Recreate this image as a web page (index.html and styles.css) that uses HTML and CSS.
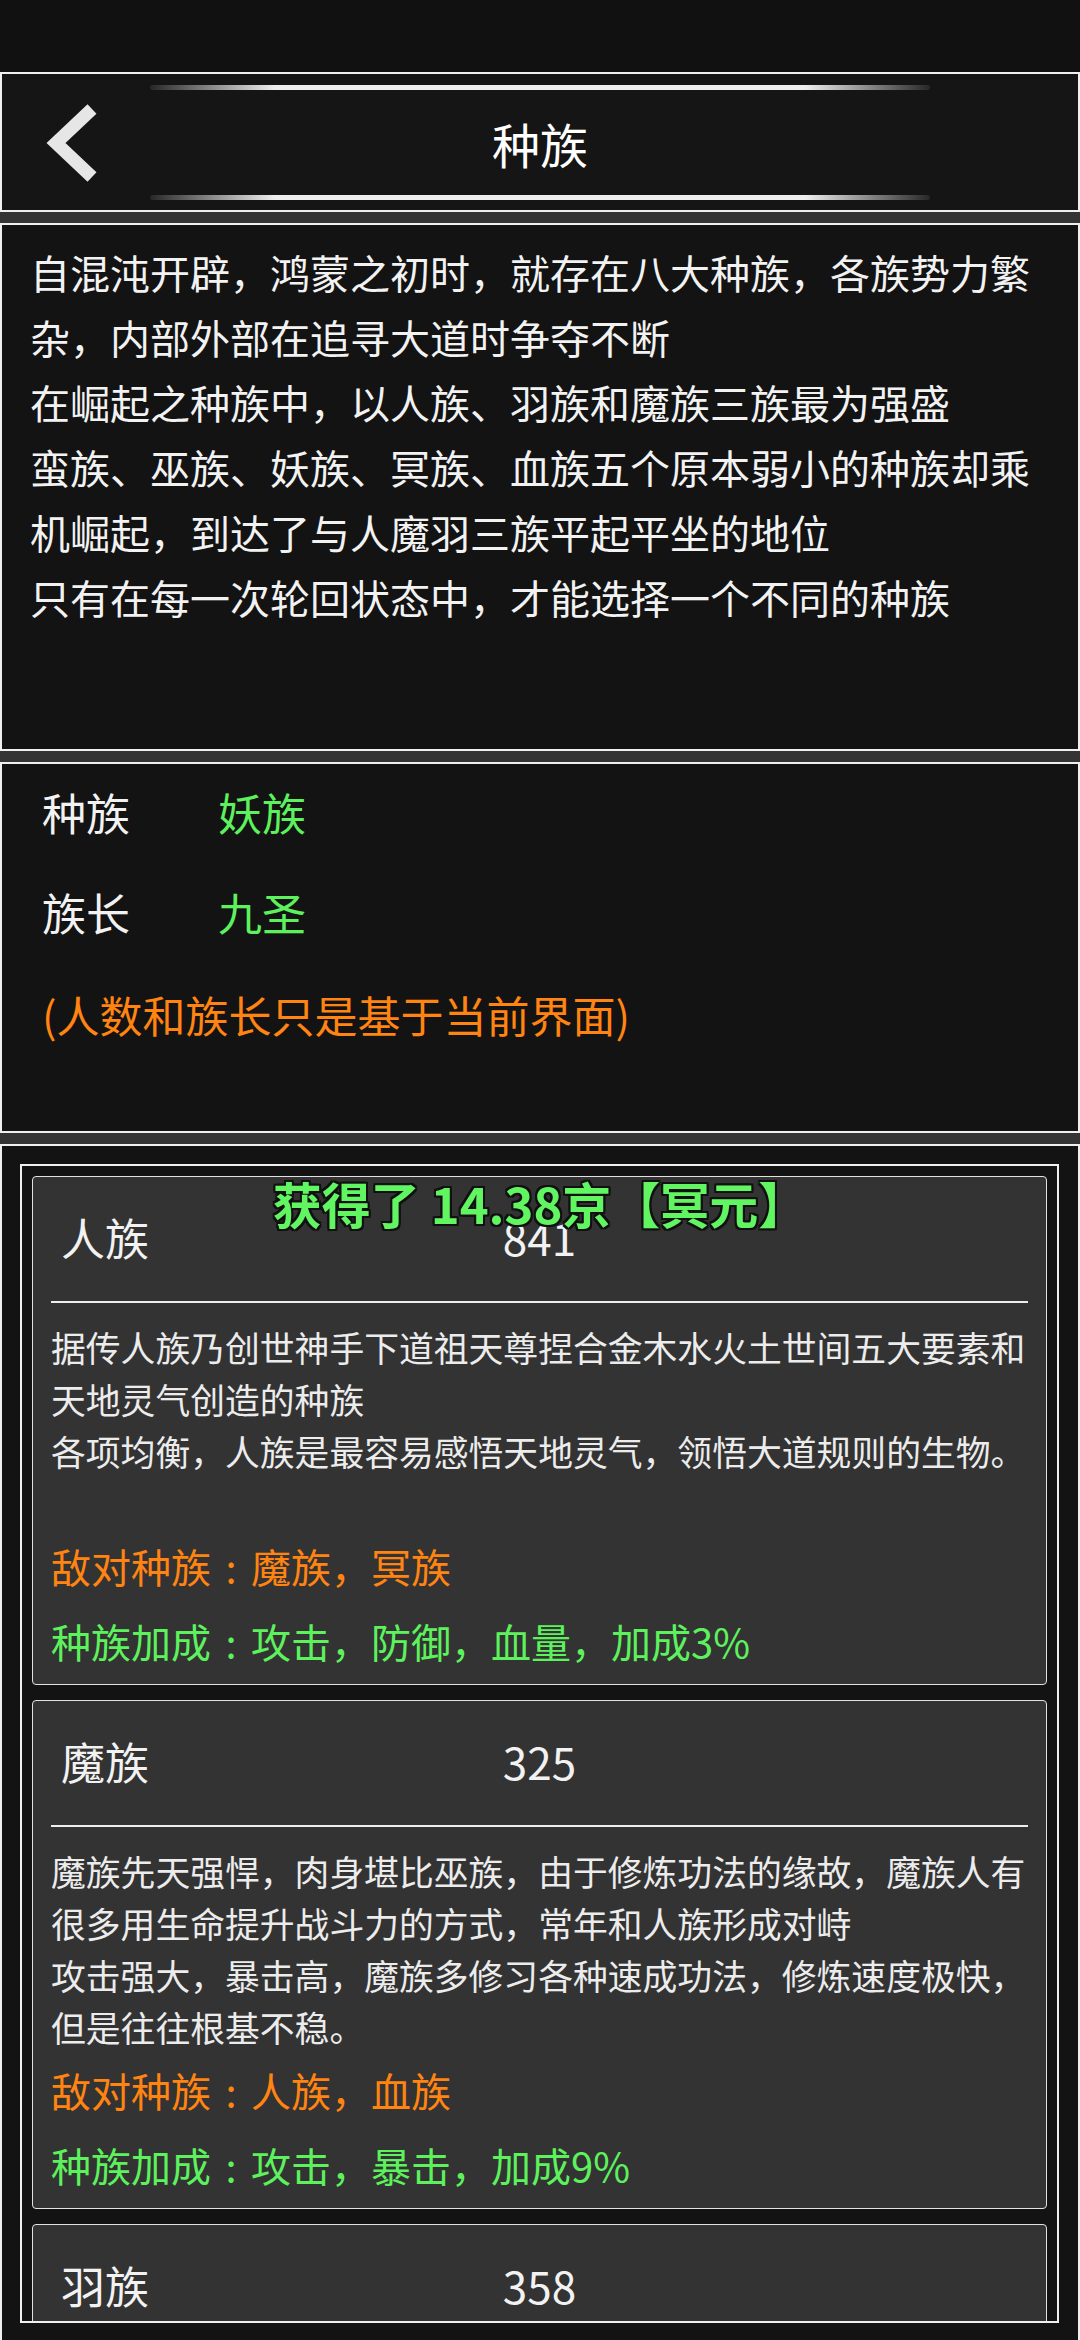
FILE: index.html
```html
<!DOCTYPE html>
<html lang="zh">
<head>
    <meta charset="UTF-8">
    <meta name="viewport" content="width=device-width, initial-scale=1.0">
    <title>种族</title>
    <link rel="stylesheet" href="styles.css">
</head>
<body>
    <div class="status-bar"></div>
    <div id="page">
        <div class="panel header">
            <div class="glow"></div>
            <div class="header-row">
                <div class="back-button" onclick="history.back()">
                    <svg width="60" height="80" viewBox="0 0 60 80">
                        <polyline points="52,6 16,40 52,74" fill="none" stroke="#e6e6e6" stroke-width="13"/>
                    </svg>
                </div>
                <h1>种族</h1>
                <div></div>
            </div>
            <div class="glow"></div>
        </div>

        <div class="panel intro">
            <p>自混沌开辟，鸿蒙之初时，就存在八大种族，各族势力繁杂，内部外部在追寻大道时争夺不断<br>在崛起之种族中，以人族、羽族和魔族三族最为强盛<br>蛮族、巫族、妖族、冥族、血族五个原本弱小的种族却乘机崛起，到达了与人魔羽三族平起平坐的地位<br>只有在每一次轮回状态中，才能选择一个不同的种族</p>
        </div>

        <div class="panel info">
            <div class="info-row"><span class="info-label">种族</span><span class="info-value">妖族</span></div>
            <div class="info-row"><span class="info-label">族长</span><span class="info-value">九圣</span></div>
            <div class="info-note">(人数和族长只是基于当前界面)</div>
        </div>

        <div class="panel list-panel">
            <div id="raceList"></div>
            <div class="toast">获得了 14.38京【冥元】</div>
        </div>
    </div>

    <script>
var races = [
    {
        name: "人族",
        count: 841,
        desc: "据传人族乃创世神手下道祖天尊捏合金木水火土世间五大要素和天地灵气创造的种族\n各项均衡，人族是最容易感悟天地灵气，领悟大道规则的生物。",
        enemy: "魔族，冥族",
        bonus: "攻击，防御，血量，加成3%"
    },
    {
        name: "魔族",
        count: 325,
        desc: "魔族先天强悍，肉身堪比巫族，由于修炼功法的缘故，魔族人有很多用生命提升战斗力的方式，常年和人族形成对峙\n攻击强大，暴击高，魔族多修习各种速成功法，修炼速度极快，但是往往根基不稳。",
        enemy: "人族，血族",
        bonus: "攻击，暴击，加成9%"
    },
    {
        name: "羽族",
        count: 358
    }
];

function renderRaces() {
    var html = "";
    var colon = "<span class='colon'>:</span>";
    for (var i = 0; i < races.length; i++) {
        var r = races[i];
        html += "<div class='race-card'>";
        html += "<div class='race-head'><span class='race-name'>" + r.name + "</span><span class='race-count'>" + r.count + "</span><span></span></div>";
        html += "<div class='race-line'></div>";
        if (r.desc) {
            html += "<div class='race-desc'>" + r.desc + "</div>";
            html += "<div class='race-enemy'>敌对种族" + colon + r.enemy + "</div>";
            html += "<div class='race-bonus'>种族加成" + colon + r.bonus + "</div>";
        }
        html += "</div>";
    }
    document.getElementById("raceList").innerHTML = html;
}

renderRaces();
    </script>
</body>
</html>
```

FILE: styles.css
```css
body {
    font-family: 'Noto Sans CJK SC', 'Noto Sans', sans-serif;
    background-color: #343434;
    margin: 0;
    padding: 0;
    width: 1080px;
    height: 2340px;
    overflow: hidden;
    color: #f2f2f2;
}

.status-bar {
    height: 72px;
    background-color: #111111;
}

#page {
    display: flex;
    flex-direction: column;
    gap: 11px;
}

.panel {
    border: 2px solid #f0f0f0;
    background-color: #131313;
}

/* header */

.header {
    background-color: #151515;
    padding: 11px 0 10px;
}

.glow {
    width: 780px;
    height: 5px;
    margin: 0 auto;
    border-radius: 3px;
    background: linear-gradient(to right, rgba(255, 255, 255, 0.08), #eeeeee 16%, #eeeeee 84%, rgba(255, 255, 255, 0.08));
}

.header-row {
    height: 105px;
    display: grid;
    grid-template-columns: 1fr auto 1fr;
    align-items: center;
}

.back-button {
    display: flex;
    padding-left: 38px;
    cursor: pointer;
}

h1 {
    margin: 0;
    font-size: 48px;
    font-weight: normal;
    line-height: 1;
    color: #ffffff;
}

/* intro */

.intro {
    height: 524px;
}

.intro p {
    margin: 0;
    padding: 15px 30px 0 28px;
    font-size: 40px;
    line-height: 65px;
}

/* info */

.info {
    height: 367px;
    padding-left: 40px;
}

.info-row {
    display: flex;
    font-size: 44px;
    line-height: 100px;
    margin-top: -2px;
    margin-bottom: 2px;
}

.info-label {
    width: 176px;
}

.info-value {
    color: #5df25d;
}

.info-note {
    color: #ff8411;
    font-size: 43px;
    line-height: 100px;
}

/* race list */

.list-panel {
    position: relative;
    border-bottom: none;
    height: 1195px;
    padding: 18px 19px 0 18px;
}

#raceList {
    height: 1135px;
    padding: 10px;
    border: 2px solid #f0f0f0;
    overflow: hidden;
    display: flex;
    flex-direction: column;
    gap: 15px;
}

.race-card {
    flex-shrink: 0;
    background-color: #333333;
    border: 1px solid #e2e2e2;
    border-radius: 4px;
    padding: 0 18px 5px;
}

.race-head {
    height: 120px;
    padding-bottom: 4px;
    display: grid;
    grid-template-columns: 1fr auto 1fr;
    align-items: center;
    font-size: 44px;
}

.race-name {
    padding-left: 10px;
}

.race-line {
    height: 2px;
    background-color: #eeeeee;
}

.race-desc {
    margin-top: 18px;
    min-height: 208px;
    font-size: 34.8px;
    line-height: 52px;
    color: #ececec;
    white-space: pre-line;
}

.race-enemy,
.race-bonus {
    font-size: 40px;
    line-height: 75px;
}

.race-enemy {
    color: #ff8411;
}

.race-bonus {
    color: #5df25d;
}

.colon {
    display: inline-block;
    width: 1em;
    text-align: center;
}

.toast {
    position: absolute;
    top: 32px;
    left: 538px;
    transform: translateX(-50%);
    font-size: 49px;
    font-weight: bold;
    line-height: 1;
    white-space: nowrap;
    color: #62f562;
    text-shadow: 2px 0 0 #111, -2px 0 0 #111, 0 2px 0 #111, 0 -2px 0 #111,
        2px 2px 0 #111, -2px -2px 0 #111, 2px -2px 0 #111, -2px 2px 0 #111;
}
```
